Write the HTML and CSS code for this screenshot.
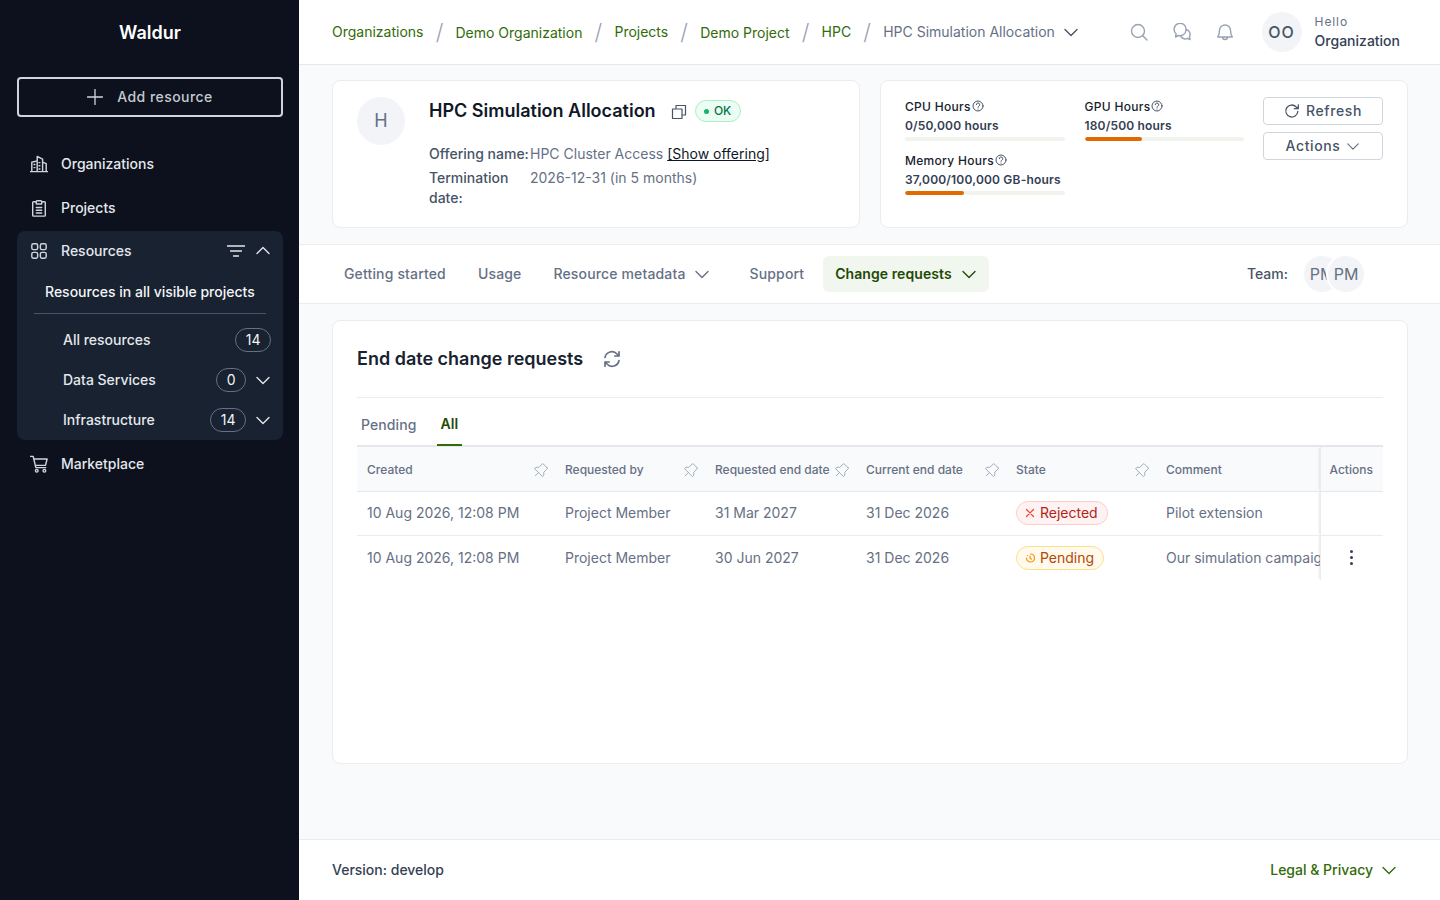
FILE: index.html
```html
<!DOCTYPE html>
<html lang="en">
<head>
    <meta charset="UTF-8">
    <title>HPC Simulation Allocation</title>
    <link rel="stylesheet" href="styles.css">
</head>
<body>
<svg class="defs" width="0" height="0">
    <symbol id="i-down" viewBox="0 0 16 16"><path d="M2 5.500 8 11.500l6-6"/></symbol>
    <symbol id="i-up" viewBox="0 0 16 16"><path d="M2 10.500 8 4.500l6 6"/></symbol>
    <symbol id="i-pin" viewBox="30 20 205 205"><path d="M224 92 164 32a8 8 0 0 0-11 0L100 85c-12-4-36-7-57 10a8 8 0 0 0-1 12l108 108a8 8 0 0 0 12-1c17-23 14-45 10-57l52-54a8 8 0 0 0 0-11ZM90 166l-42 42"/></symbol>
    <symbol id="i-help" viewBox="0 0 12 12"><circle cx="6" cy="6" r="5"/><path d="M4.300 4.700a1.700 1.700 0 1 1 2.500 1.500c-.5.300-.8.600-.8 1.100M6 9v.1"/></symbol>
</svg>
<div class="app">
    <aside class="sidebar">
        <div class="brand">Waldur</div>
        <a class="add-btn">
            <svg class="ic16 plus" viewBox="0 0 16 16"><path d="M8 .5v15M.5 8h15"/></svg>
            <span>Add resource</span>
        </a>
        <nav class="side-nav">
            <a class="side-item">
                <svg class="side-ic" viewBox="0 0 20 20"><path d="M.5 18.500h19M2 18.500V8l6-1.500M8 18.500V1.500l6 3v14M14 8l4 1.500v9M4.500 10.500h1M10 8.500h1M4.500 14h1M10 12h1M10 15.500h1"/></svg>
                <span>Organizations</span>
            </a>
            <a class="side-item">
                <svg class="side-ic" viewBox="0 0 20 20"><path d="M7 3H4a1 1 0 0 0-1 1v14a1 1 0 0 0 1 1h12a1 1 0 0 0 1-1V4a1 1 0 0 0-1-1h-3M7 5.500V3a1 1 0 0 1 1-1h4a1 1 0 0 1 1 1v2.500ZM7 9.500h6M7 12.500h6M7 15.500h6"/></svg>
                <span>Projects</span>
            </a>
            <div class="side-group">
                <div class="side-item group-head">
                    <svg class="side-ic" viewBox="0 0 20 20"><rect x="2" y="2" width="6.500" height="6.500" rx="1.800"/><rect x="11.500" y="2" width="6.500" height="6.500" rx="1.800"/><rect x="2" y="11.500" width="6.500" height="6.500" rx="1.800"/><rect x="11.500" y="11.500" width="6.500" height="6.500" rx="1.800"/></svg>
                    <span>Resources</span>
                    <svg class="filter" viewBox="0 0 18 12"><path d="M0 1h18M3.500 6h11M6.500 11h5"/></svg>
                    <svg class="chev chev-light"><use href="#i-up"/></svg>
                </div>
                <div class="scope">Resources in all visible projects</div>
                <div class="sub-item">
                    <span class="sub-label">All resources</span>
                    <span class="count">14</span>
                </div>
                <div class="sub-item">
                    <span class="sub-label">Data Services</span>
                    <span class="count">0</span>
                    <svg class="chev chev-light"><use href="#i-down"/></svg>
                </div>
                <div class="sub-item">
                    <span class="sub-label">Infrastructure</span>
                    <span class="count">14</span>
                    <svg class="chev chev-light"><use href="#i-down"/></svg>
                </div>
            </div>
            <a class="side-item">
                <svg class="side-ic" viewBox="0 0 20 20"><path d="M.5 1.500h3l3 12.500h11M4.300 4.500H19l-1.800 7H6"/><circle cx="7.500" cy="17.500" r="1.500"/><circle cx="16" cy="17.500" r="1.500"/></svg>
                <span>Marketplace</span>
            </a>
        </nav>
    </aside>

    <div class="main">
        <header class="topbar">
            <div class="crumbs">
                <a>Organizations</a><i>/</i>
                <a class="low">Demo Organization</a><i>/</i>
                <a>Projects</a><i>/</i>
                <a class="low">Demo Project</a><i>/</i>
                <a>HPC</a><i>/</i>
                <span class="crumb-last">HPC Simulation Allocation</span>
                <svg class="chev chev-dark"><use href="#i-down"/></svg>
            </div>
            <div class="top-icons">
                <svg viewBox="0 0 18 18"><circle cx="8" cy="8" r="6.500"/><path d="m12.800 12.800 4.200 4.200"/></svg>
                <svg viewBox="0 0 18 18"><path d="M5.500 12.500 2.500 14l.6-3.200A6 6 0 1 1 13 7.500a6 6 0 0 1-7.500 5Z"/><path d="M13 6.500a5 5 0 0 1 3.500 7.300l.5 2.700-2.700-1.200a5 5 0 0 1-6.300-1.800"/></svg>
                <svg viewBox="0 0 18 18"><path d="M3.500 7.500a5.500 5.500 0 0 1 11 0c0 3.500.8 5 1.800 6.500H1.700c1-1.500 1.800-3 1.800-6.500ZM6.500 14a2.500 2.500 0 0 0 5 0"/></svg>
            </div>
            <div class="user">
                <div class="avatar-oo">OO</div>
                <div class="user-text">
                    <div class="hello">Hello</div>
                    <div class="org">Organization</div>
                </div>
            </div>
        </header>

        <section class="summary">
            <div class="card info-card">
                <div class="avatar-h">H</div>
                <div class="info-body">
                    <div class="title-row">
                        <h1>HPC Simulation Allocation</h1>
                        <svg class="copy" viewBox="0 0 16 16"><path d="M5 5V1.500h9.500V11H11M1.500 5H11v9.500H1.500Z"/></svg>
                        <span class="ok"><b></b>OK</span>
                    </div>
                    <dl class="facts">
                        <dt>Offering name:</dt>
                        <dd>HPC Cluster Access <a>[Show offering]</a></dd>
                        <dt>Termination date:</dt>
                        <dd>2026-12-31 (in 5 months)</dd>
                    </dl>
                </div>
            </div>
            <div class="card quota-card">
                <div class="quotas">
                    <div class="quota">
                        <div class="q-name">CPU Hours <svg class="help"><use href="#i-help"/></svg></div>
                        <div class="q-val">0/50,000 hours</div>
                        <div class="q-bar"></div>
                    </div>
                    <div class="quota">
                        <div class="q-name">GPU Hours <svg class="help"><use href="#i-help"/></svg></div>
                        <div class="q-val">180/500 hours</div>
                        <div class="q-bar"><div class="q-fill" style="width:36%"></div></div>
                    </div>
                    <div class="quota">
                        <div class="q-name">Memory Hours <svg class="help"><use href="#i-help"/></svg></div>
                        <div class="q-val">37,000/100,000 GB-hours</div>
                        <div class="q-bar"><div class="q-fill" style="width:37%"></div></div>
                    </div>
                </div>
                <div class="quota-btns">
                    <a class="btn">
                        <svg class="ic16" viewBox="0 0 16 16"><path d="M13.800 8.500A6 6 0 1 1 12 3.700l2 1.800M14.300 1.800v3.900h-3.900"/></svg>
                        Refresh
                    </a>
                    <a class="btn">Actions <svg class="chev chev-btn"><use href="#i-down"/></svg></a>
                </div>
            </div>
        </section>

        <nav class="tabs">
            <a class="tab">Getting started</a>
            <a class="tab">Usage</a>
            <a class="tab tab-menu">Resource metadata <svg class="chev chev-tab"><use href="#i-down"/></svg></a>
            <a class="tab">Support</a>
            <a class="tab tab-on">Change requests <svg class="chev chev-on"><use href="#i-down"/></svg></a>
            <div class="team">
                <span class="team-label">Team:</span>
                <div class="team-list">
                    <span class="pm">PM</span>
                    <span class="pm">PM</span>
                </div>
            </div>
        </nav>

        <section class="content">
            <div class="card req-card">
                <div class="req-head">
                    <h2>End date change requests</h2>
                    <svg class="reload" viewBox="0 0 18 18"><path d="M2 7.500A7 7 0 0 1 14 4l2 2M16 1.800V6h-4.200M16 10.500A7 7 0 0 1 4 14l-2-2M2 16.200V12h4.200"/></svg>
                </div>
                <div class="subtabs">
                    <a class="subtab">Pending</a>
                    <a class="subtab subtab-on">All</a>
                </div>
                <div class="table-wrap">
                    <table>
                        <colgroup>
                            <col class="c-created"><col class="c-by"><col class="c-req"><col class="c-cur"><col class="c-state"><col class="c-com"><col class="c-act">
                        </colgroup>
                        <thead>
                            <tr>
                                <th><div class="th-in">Created<svg class="pin"><use href="#i-pin"/></svg></div></th>
                                <th><div class="th-in">Requested by<svg class="pin"><use href="#i-pin"/></svg></div></th>
                                <th><div class="th-in">Requested end date<svg class="pin"><use href="#i-pin"/></svg></div></th>
                                <th><div class="th-in">Current end date<svg class="pin"><use href="#i-pin"/></svg></div></th>
                                <th><div class="th-in">State<svg class="pin"><use href="#i-pin"/></svg></div></th>
                                <th>Comment</th>
                                <th class="act">Actions</th>
                            </tr>
                        </thead>
                        <tbody>
                            <tr>
                                <td>10 Aug 2026, 12:08 PM</td>
                                <td>Project Member</td>
                                <td>31 Mar 2027</td>
                                <td>31 Dec 2026</td>
                                <td><span class="pill pill-red"><svg viewBox="0 0 10 10"><path d="m1.500 1.500 7 7M8.500 1.500l-7 7"/></svg>Rejected</span></td>
                                <td class="clip">Pilot extension</td>
                                <td class="act"></td>
                            </tr>
                            <tr class="last">
                                <td>10 Aug 2026, 12:08 PM</td>
                                <td>Project Member</td>
                                <td>30 Jun 2027</td>
                                <td>31 Dec 2026</td>
                                <td><span class="pill pill-amber"><svg viewBox="0 0 10 10"><path d="M5.500 1a4 4 0 1 1-4 4M5 3v2.200l1.500 1M2.500 2.500h.1"/></svg>Pending</span></td>
                                <td class="clip">Our simulation campaign needs more time</td>
                                <td class="act"><span class="dots"><b></b><b></b><b></b></span></td>
                            </tr>
                        </tbody>
                    </table>
                </div>
            </div>
        </section>

        <footer class="foot">
            <span>Version: develop</span>
            <a class="legal">Legal &amp; Privacy <svg class="chev chev-legal"><use href="#i-down"/></svg></a>
        </footer>
    </div>
</div>
</body>
</html>
```

FILE: styles.css
```css
*{box-sizing:border-box;}
html,body{margin:0;height:100%;overflow:hidden;}
body{font-family:Inter,"Liberation Sans",sans-serif;font-size:14px;line-height:20px;color:#344054;background:#f9fafb;}
.defs{position:absolute;}
svg{fill:none;stroke:currentColor;stroke-linecap:round;stroke-linejoin:round;display:block;flex:none;}
h1,h2,dl,dd{margin:0;}

.app{display:flex;height:900px;}

/* sidebar */
.sidebar{width:299px;flex:none;background:#0c111d;padding:0 16px 0 17px;color:#ecedef;}
.brand{height:65px;display:flex;align-items:center;justify-content:center;font-size:18px;font-weight:600;color:#fff;}
.add-btn{margin-top:12px;height:40px;width:266px;border:2px solid #d0d5dd;border-radius:4px;display:flex;align-items:center;justify-content:center;gap:14px;color:#c4c9d2;font-weight:500;letter-spacing:.45px;}
.plus{color:#d0d5dd;stroke-width:1.4;}
.ic16{width:16px;height:16px;stroke-width:1.3;}
.side-nav{margin-top:25px;width:266px;}
.side-item{height:44px;display:flex;align-items:center;padding-left:13px;color:#e4e7ec;font-weight:500;}
.side-ic{width:18px;height:18px;margin-right:13px;color:#cfd4dc;stroke-width:1.6;}
.side-group{background:#182230;border-radius:8px;height:209px;margin:1px 0 2px;}
.group-head{height:40px;}
.filter{width:18px;height:12px;margin-left:auto;color:#e4e7ec;stroke-width:1.3;}
.chev{width:16px;height:16px;stroke-width:1.4;}
.chev-light{color:#e4e7ec;margin:0 12px 0 10px;}
.group-head .filter + .chev{margin-left:10px;}
.scope{height:43px;margin:0 17px;padding:11px 0 0 11px;border-bottom:1px solid #475467;color:#f2f4f7;font-weight:500;white-space:nowrap;}
.sub-item{height:40px;display:flex;align-items:center;padding-left:46px;color:#e4e7ec;font-weight:500;}
.scope + .sub-item{margin-top:6px;}
.sub-label{margin-right:auto;}
.count{height:24px;min-width:29px;padding:0 9.5px;border:1px solid #667085;border-radius:12px;display:flex;align-items:center;justify-content:center;color:#f2f4f7;font-weight:400;}
.sub-item > .count:last-child{margin-right:12px;}
.sub-item .chev-light{margin-left:9px;}

/* top bar */
.main{flex:1;min-width:0;display:flex;flex-direction:column;}
.topbar{height:65px;flex:none;background:#fff;border-bottom:1px solid #e4e7ec;display:flex;align-items:center;padding:0 40px 0 33px;}
.crumbs{display:flex;align-items:center;color:#336b09;white-space:nowrap;}
.crumbs a.low{padding-top:2px;}
.crumbs i{font-style:normal;color:#98a2b3;font-size:22px;font-weight:300;margin:0 12px;width:8px;text-align:center;}
.crumb-last{color:#667085;}
.chev-dark{margin-left:8px;color:#475467;}
.top-icons{margin-left:auto;display:flex;gap:25px;color:#98a2b3;}
.top-icons svg{width:18px;height:18px;stroke-width:1.4;}
.user{display:flex;align-items:center;margin-left:28px;}
.avatar-oo{width:40px;height:40px;border-radius:50%;background:#f2f4f7;display:flex;align-items:center;justify-content:center;color:#475467;font-size:16px;font-weight:500;letter-spacing:1px;}
.user-text{margin-left:13px;}
.hello{font-size:12px;line-height:18px;color:#667085;letter-spacing:.9px;}
.org{line-height:20px;color:#344054;font-weight:500;}

/* summary cards */
.summary{display:flex;gap:20px;padding:15px 32px 16px 33px;}
.card{background:#fff;border:1px solid #eaecf0;border-radius:8px;}
.info-card,.quota-card{width:528px;height:148px;display:flex;}
.info-card{padding:16px 24px;}
.avatar-h{width:48px;height:48px;border-radius:50%;background:#f2f4f7;display:flex;align-items:center;justify-content:center;font-size:18px;color:#667085;flex:none;}
.info-body{margin-left:24px;flex:1;}
.title-row{display:flex;align-items:center;height:28px;}
h1{font-size:18px;line-height:28px;font-weight:600;color:#101828;}
.copy{width:16px;height:16px;margin:2px 8px 0 15px;color:#475467;stroke-width:1.2;}
.ok{height:22px;width:46px;border:1px solid #abefc6;background:#ecfdf3;border-radius:11px;display:flex;align-items:center;justify-content:center;gap:5px;font-size:12px;font-weight:500;color:#067647;}
.ok b{width:5px;height:5px;border-radius:50%;background:#17b26a;}
.facts{display:grid;grid-template-columns:101px 1fr;row-gap:4px;margin-top:19px;}
.facts dt{font-weight:500;color:#475467;}
.facts dd{color:#667085;}
.facts dd a{color:#101828;text-decoration:underline;}
.quota-card{padding:16px 24px;}
.quotas{width:340px;display:flex;flex-wrap:wrap;column-gap:20px;align-content:flex-start;}
.quota{width:159.5px;height:54px;padding-top:1px;font-size:12px;line-height:18px;font-weight:500;letter-spacing:.3px;color:#182230;}
.q-name{display:flex;align-items:center;gap:1px;height:18px;}
.help{width:12px;height:12px;margin-top:-2px;stroke-width:.9;color:#344054;}
.q-val{margin-top:1px;font-weight:600;letter-spacing:.18px;color:#344054;}
.q-bar{height:4px;background:#f0f4ec;border-radius:2px;margin-top:2px;overflow:hidden;}
.q-fill{height:4px;background:#e06a00;border-radius:2px;}
.quota-btns{margin-left:18px;width:120px;display:flex;flex-direction:column;gap:7px;}
.btn{height:28px;border:1px solid #d0d5dd;border-radius:4px;display:flex;align-items:center;justify-content:center;gap:6px;font-weight:500;color:#475467;letter-spacing:.6px;}
.chev-btn{width:14px;height:14px;color:#667085;}

/* tabs */
.tabs{height:60px;flex:none;background:#fff;border-top:1px solid #eaecf0;border-bottom:1px solid #eaecf0;display:flex;align-items:center;gap:8px;padding:0 76px 0 33px;}
.tab{height:36px;padding:0 12px;border-radius:6px;display:flex;align-items:center;color:#667085;font-weight:500;letter-spacing:.15px;white-space:nowrap;}
.tab-menu{padding-right:20px;}
.chev-tab{width:16px;height:16px;margin-left:8px;color:#667085;}
.tab-on{background:#f1f6ee;color:#1f4a06;font-weight:600;letter-spacing:.07px;margin-left:-1px;}
.chev-on{margin-left:9px;color:#1f4a06;}
.team{margin-left:auto;display:flex;align-items:center;}
.team-label{font-weight:500;color:#475467;margin-right:16px;}
.team-list{display:flex;}
.pm{width:36px;height:36px;border-radius:50%;background:#f2f4f7;display:flex;align-items:center;justify-content:center;font-size:16px;color:#667085;overflow:hidden;white-space:nowrap;}
.pm + .pm{margin-left:-12px;box-shadow:0 0 0 2px #fff;}

/* change requests */
.content{padding:16px 32px 0 33px;}
.req-card{height:444px;padding:0 24px;}
.req-head{height:77px;display:flex;align-items:center;border-bottom:1px solid #eaecf0;}
h2{font-size:18px;line-height:28px;font-weight:600;color:#182230;}
.reload{width:18px;height:18px;margin-left:20px;color:#667085;stroke-width:1.7;}
.subtabs{display:flex;height:48px;}
.subtab{padding:6px 4px 0;margin-right:16px;height:48px;display:flex;align-items:center;color:#667085;font-weight:500;letter-spacing:.1px;}
.subtab-on{color:#1f4a06;font-weight:600;border-bottom:2px solid #336b09;position:relative;z-index:1;}
.table-wrap{border-top:2px solid #e4e7ec;margin-top:-1px;}
table{width:1026px;table-layout:fixed;border-collapse:collapse;}
.c-created{width:198px;}
.c-by{width:150px;}
.c-req{width:151px;}
.c-cur{width:150px;}
.c-state{width:150px;}
.c-com{width:164px;}
.c-act{width:63px;}
th{height:44px;padding:2px 10px 0;text-align:left;font-size:12px;line-height:18px;font-weight:500;color:#667085;background:#f9fafb;border-bottom:1px solid #e4e7ec;}
.th-in{display:flex;align-items:center;justify-content:space-between;margin-right:-3px;white-space:nowrap;}
.pin{width:14px;height:14px;color:#98a2b3;stroke-width:13;}
td{height:44px;padding:0 10px;color:#667085;white-space:nowrap;border-bottom:1px solid #eaecf0;}
tr.last td{height:45px;border-bottom:0;}
td.clip{overflow:hidden;padding-right:0;}
th.act,td.act{background:#fff;box-shadow:-2px 0 2px -1px rgba(16,24,40,.1);padding:0 0 0 9px;border-left:1px solid #eaecf0;}
th.act{background:#f9fafb;padding-top:2px;}
.dots{display:flex;flex-direction:column;align-items:center;gap:3px;width:44px;}
.dots b{width:3px;height:3px;border-radius:50%;background:#344054;}
.pill{display:inline-flex;align-items:center;gap:5px;height:24px;padding:0 9px 0 8px;border-radius:12px;border:1px solid;vertical-align:middle;}
.pill svg{width:10px;height:10px;stroke-width:1.2;}
.pill-red{background:#fef3f2;border-color:#fecdca;color:#b42318;}
.pill-red svg{color:#f04438;}
.pill-amber{background:#fffaeb;border-color:#fedf89;color:#b54708;}
.pill-amber svg{color:#f79009;}

/* footer */
.foot{margin-top:auto;height:61px;flex:none;background:#fff;border-top:1px solid #eaecf0;display:flex;align-items:center;justify-content:space-between;padding:0 43px 0 33px;color:#344054;font-weight:500;}
.legal{display:flex;align-items:center;color:#336b09;gap:8px;}
.chev-legal{color:#336b09;}
```
